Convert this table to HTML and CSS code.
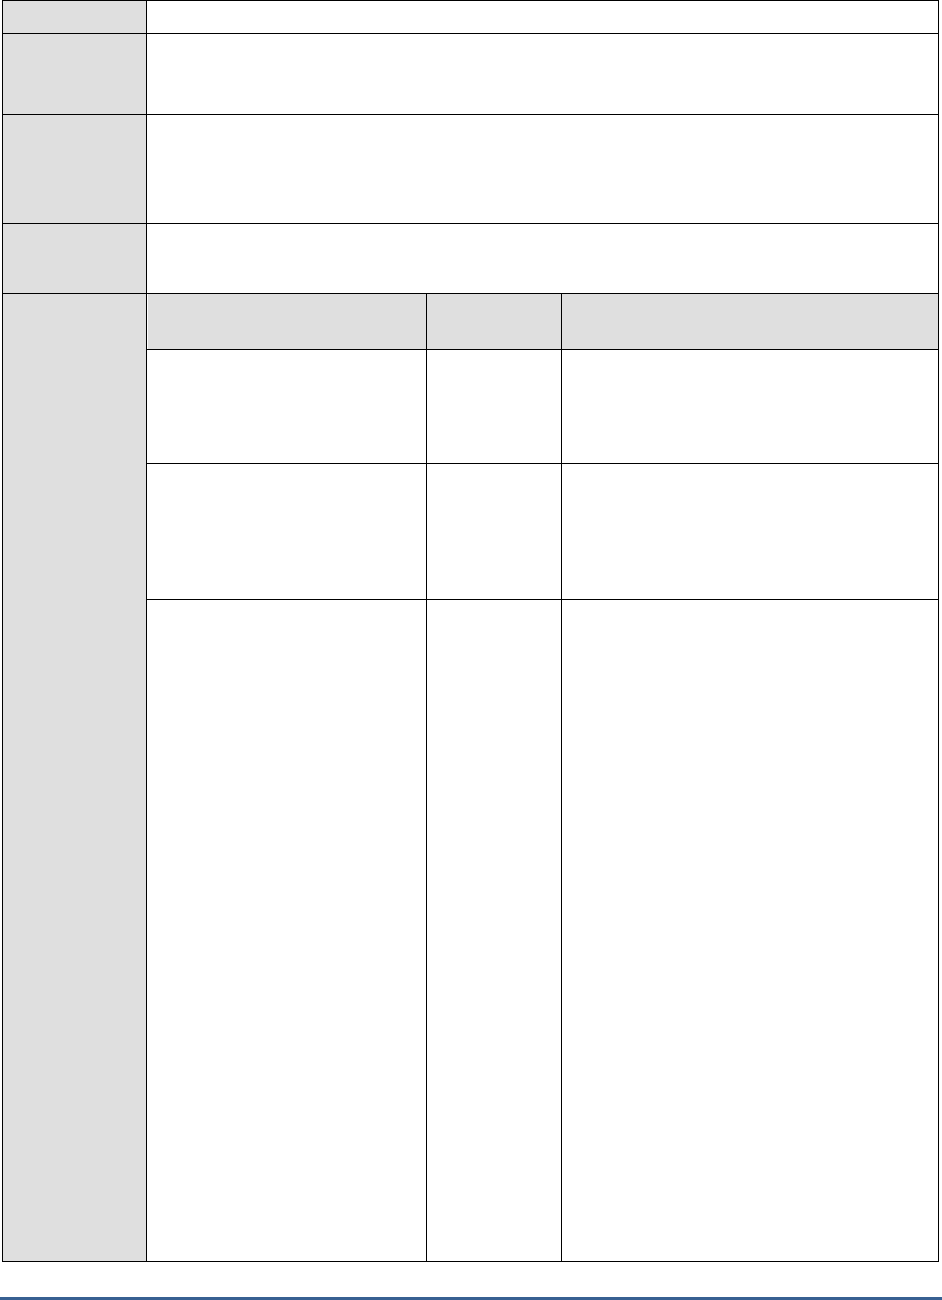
FILE: index.html
```html
<!DOCTYPE html>
<html lang="en">
<head>
    <meta charset="UTF-8">
    <meta name="viewport" content="width=device-width, initial-scale=1.0">
    <title>Test details</title>
    <link rel="stylesheet" href="styles.css">
</head>
<body>
    <div class="spec-table">
        <div class="label-cell"></div>
        <div class="value-cell"></div>

        <div class="label-cell"></div>
        <div class="value-cell"></div>

        <div class="label-cell"></div>
        <div class="value-cell"></div>

        <div class="label-cell"></div>
        <div class="value-cell"></div>

        <div class="label-cell"></div>
        <div class="measures">
            <div class="measure-head"></div>
            <div class="measure-head"></div>
            <div class="measure-head"></div>

            <div class="measure-cell"></div>
            <div class="measure-cell"></div>
            <div class="measure-cell"></div>

            <div class="measure-cell"></div>
            <div class="measure-cell"></div>
            <div class="measure-cell"></div>

            <div class="measure-cell"></div>
            <div class="measure-cell"></div>
            <div class="measure-cell"></div>
        </div>
    </div>

    <div class="page-rule"></div>
</body>
</html>
```

FILE: styles.css
```css
* {
    margin: 0;
    padding: 0;
    box-sizing: border-box;
}

body {
    font-family: "Liberation Sans", Arial, sans-serif;
    background: white;
    color: black;
    padding-left: 2px;
}

/* outer table: black background shows through the 1px gaps as rules */
.spec-table {
    display: grid;
    width: 937px;
    grid-template-columns: 143px 791px;
    grid-template-rows: 32px 80px 108px 69px 967px;
    gap: 1px;
    padding: 1px;
    background: #000;
}

.label-cell {
    background: #dfdfdf;
}

.value-cell {
    background: white;
}

/* nested measures table */
.measures {
    display: grid;
    grid-template-columns: 279px 134px 376px;
    grid-template-rows: 55px 113px 135px 661px;
    gap: 1px;
    background: #000;
}

.measure-head {
    background: #dfdfdf;
    border-left: 1px solid white;
}

.measure-head + .measure-head {
    border-left: none;
}

.measure-cell {
    background: white;
}

.page-rule {
    height: 3px;
    margin-top: 35px;
    margin-left: -2px;
    background: #386092;
}
```
